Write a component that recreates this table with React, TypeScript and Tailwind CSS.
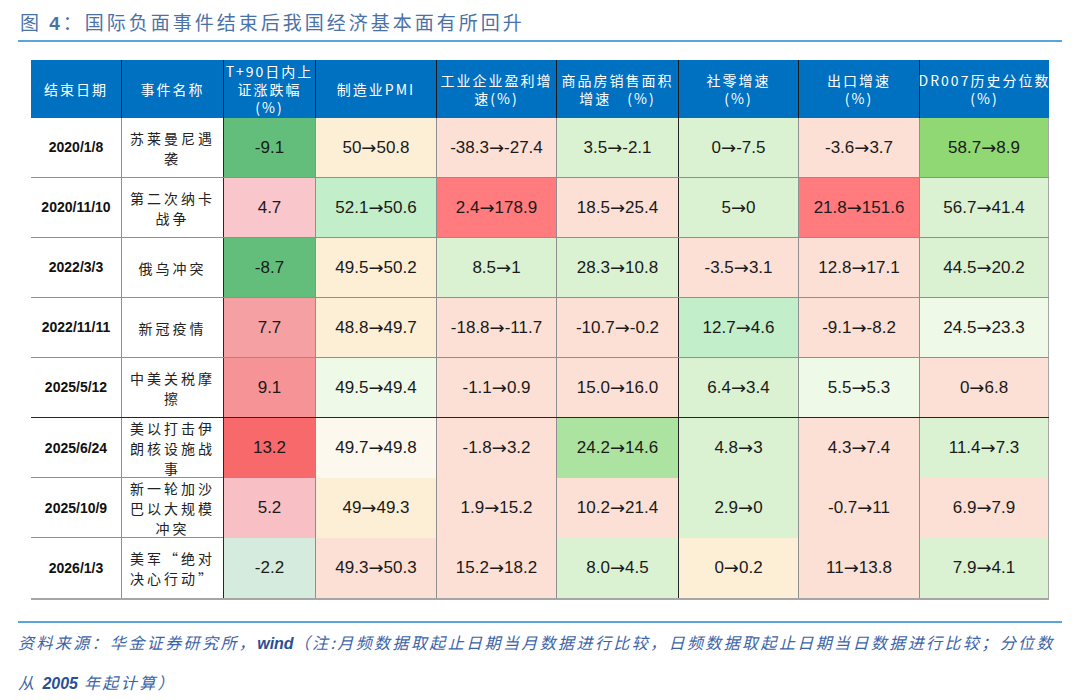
const cjk = "font-['Noto_Sans_CJK_SC',sans-serif]";
const arial = "font-['Liberation_Sans',Arial,sans-serif]";

const C = {
  dg: 'bg-[#63be7b]',
  pk: 'bg-[#f9c6cb]',
  pk2: 'bg-[#f8bfc5]',
  r1: 'bg-[#f5a0a3]',
  r2: 'bg-[#f69396]',
  r3: 'bg-[#f8696b]',
  mg: 'bg-[#d4ebdd]',
  cr: 'bg-[#fcefd6]',
  cr2: 'bg-[#fcf8ee]',
  mint: 'bg-[#c2efc9]',
  vlg: 'bg-[#eff9e7]',
  sa: 'bg-[#fce0d5]',
  red: 'bg-[#ff7b7e]',
  lg: 'bg-[#daf2d1]',
  g2: 'bg-[#ade3a0]',
  g3: 'bg-[#8fd873]',
};

type Row = { date: string; name: string; cells: [string, string][] };

const rows: Row[] = [
  {
    date: '2020/1/8',
    name: '苏莱曼尼遇袭',
    cells: [
      ['-9.1', C.dg], ['50→50.8', C.cr], ['-38.3→-27.4', C.sa], ['3.5→-2.1', C.lg],
      ['0→-7.5', C.lg], ['-3.6→3.7', C.sa], ['58.7→8.9', C.g3],
    ],
  },
  {
    date: '2020/11/10',
    name: '第二次纳卡战争',
    cells: [
      ['4.7', C.pk], ['52.1→50.6', C.mint], ['2.4→178.9', C.red], ['18.5→25.4', C.sa],
      ['5→0', C.lg], ['21.8→151.6', C.red], ['56.7→41.4', C.lg],
    ],
  },
  {
    date: '2022/3/3',
    name: '俄乌冲突',
    cells: [
      ['-8.7', C.dg], ['49.5→50.2', C.cr], ['8.5→1', C.lg], ['28.3→10.8', C.lg],
      ['-3.5→3.1', C.sa], ['12.8→17.1', C.sa], ['44.5→20.2', C.lg],
    ],
  },
  {
    date: '2022/11/11',
    name: '新冠疫情',
    cells: [
      ['7.7', C.r1], ['48.8→49.7', C.cr], ['-18.8→-11.7', C.sa], ['-10.7→-0.2', C.sa],
      ['12.7→4.6', C.mint], ['-9.1→-8.2', C.sa], ['24.5→23.3', C.vlg],
    ],
  },
  {
    date: '2025/5/12',
    name: '中美关税摩擦',
    cells: [
      ['9.1', C.r2], ['49.5→49.4', C.vlg], ['-1.1→0.9', C.sa], ['15.0→16.0', C.sa],
      ['6.4→3.4', C.lg], ['5.5→5.3', C.vlg], ['0→6.8', C.sa],
    ],
  },
  {
    date: '2025/6/24',
    name: '美以打击伊朗核设施战事',
    cells: [
      ['13.2', C.r3], ['49.7→49.8', C.cr2], ['-1.8→3.2', C.sa], ['24.2→14.6', C.g2],
      ['4.8→3', C.lg], ['4.3→7.4', C.sa], ['11.4→7.3', C.lg],
    ],
  },
  {
    date: '2025/10/9',
    name: '新一轮加沙巴以大规模冲突',
    cells: [
      ['5.2', C.pk2], ['49→49.3', C.cr], ['1.9→15.2', C.sa], ['10.2→21.4', C.sa],
      ['2.9→0', C.lg], ['-0.7→11', C.sa], ['6.9→7.9', C.sa],
    ],
  },
  {
    date: '2026/1/3',
    name: '美军“绝对决心行动”',
    cells: [
      ['-2.2', C.mg], ['49.3→50.3', C.sa], ['15.2→18.2', C.sa], ['8.0→4.5', C.lg],
      ['0→0.2', C.cr], ['11→13.8', C.sa], ['7.9→4.1', C.lg],
    ],
  },
];

const headers = [
  ['结束日期'],
  ['事件名称'],
  ['T+90日内上', '证涨跌幅', '(%)'],
  ['制造业PMI'],
  ['工业企业盈利增', '速(%)'],
  ['商品房销售面积', '增速　(%)'],
  ['社零增速', '(%)'],
  ['出口增速', '(%)'],
  ['DR007历史分位数', '(%)'],
];

const grid =
  'grid grid-cols-[91px_102px_92px_121px_120px_122px_120px_121px_129px]';

function Value({ v }: { v: string }) {
  const parts = v.split('→');
  if (parts.length < 2) return <>{v}</>;
  return (
    <>
      {parts[0]}
      <span className="font-['DejaVu_Sans',sans-serif] text-[18px] leading-none">→</span>
      {parts[1]}
    </>
  );
}

export default function App() {
  return (
    <div className="w-[1080px] h-[700px] bg-white px-[18px] overflow-hidden">
      <div className="h-[42px] border-b-2 border-[#5aa5dc] pt-[10px]">
        <div
          className={`pl-[2px] text-[19px] leading-[24px] tracking-[3px] text-[#4a72a8] ${cjk}`}
        >
          图 <span className={`font-bold ${arial}`}>4</span>：国际负面事件结束后我国经济基本面有所回升
        </div>
      </div>

      <div className="ml-[13px] mt-[18px] w-[1018px] border-b-2 border-[#a6a6a6]">
        <div className={`${grid} h-[58px] bg-[#0070c0] text-white`}>
          {headers.map((lines, i) => (
            <div
              key={i}
              className={`flex flex-col items-center justify-center text-[14px] leading-[18px] tracking-[2px] ${cjk} ${
                i < 8 ? 'border-r border-[#1a1a1a]' : ''
              }`}
            >
              {lines.map((l, j) => (
                <div key={j} className="whitespace-pre">
                  {l}
                </div>
              ))}
            </div>
          ))}
        </div>

        {rows.map((r, ri) => (
          <div
            key={ri}
            className={`${grid} h-[60px] ${
              ri === 7 ? '' : ri === 4 ? 'border-b border-[#262626]' : 'border-b border-[#8f8f8f]'
            }`}
          >
            <div
              className={`flex items-center justify-center border-r border-[#8f8f8f] text-[14px] font-bold text-[#111] ${arial}`}
            >
              {r.date}
            </div>
            <div className="flex items-center justify-center border-r border-[#262626]">
              <div
                className={`w-[88px] text-center text-[14px] leading-[20px] tracking-[3px] text-[#222] ${cjk}`}
              >
                {r.name}
              </div>
            </div>
            {r.cells.map(([v, bg], ci) => (
              <div
                key={ci}
                className={`flex items-center justify-center text-[17px] text-[#1a1a1a] ${arial} ${bg} ${
                  ci === 3 ? 'border-r border-[#262626]' : ci === 6 ? 'border-r border-[#a6a6a6]' : 'border-r border-[#8f8f8f]'
                }`}
              >
                <Value v={v} />
              </div>
            ))}
          </div>
        ))}
      </div>

      <div className="mt-[21px] border-t-2 border-[#5aa5dc]">
        <div
          className={`italic text-[16px] leading-[38px] tracking-[2.4px] text-[#3b64a8] ${cjk}`}
        >
          资料来源：华金证券研究所，<span className={`font-bold tracking-normal text-[#2a4f95] ${arial}`}>wind</span>（注:月频数据取起止日期当月数据进行比较，日频数据取起止日期当日数据进行比较；分位数
          <br />
          从 <span className={`font-bold tracking-normal text-[#2a4f95] ${arial}`}>2005</span> 年起计算）
        </div>
      </div>
    </div>
  );
}
